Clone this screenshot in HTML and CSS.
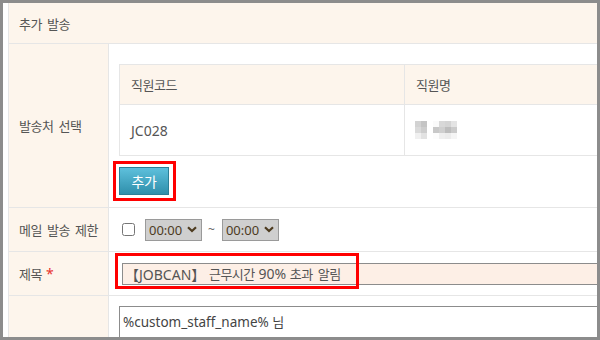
FILE: index.html
```html
<!DOCTYPE html>
<html lang="ko">
<head>
<meta charset="utf-8">
<link rel="stylesheet" href="styles.css">
</head>
<body>
<div class="frame">
  <div class="form">
    <div class="head"><span class="k">추가 발송</span></div>

    <div class="row row-dest">
      <div class="label"><span class="k">발송처 선택</span></div>
      <div class="cell cell-dest">
        <div class="staff">
          <div class="th c1"><span class="k">직원코드</span></div>
          <div class="th c2"><span class="k">직원명</span></div>
          <div class="td c1">JC028</div>
          <div class="td c2">
            <svg class="blur" width="42" height="18" viewBox="0 0 42 18">
              <rect x="0" y="0" width="6" height="6" fill="#d2d2d2"/>
              <rect x="6" y="0" width="6" height="6" fill="#c4c4c4"/>
              <rect x="0" y="6" width="6" height="6" fill="#dadada"/>
              <rect x="6" y="6" width="6" height="6" fill="#cdcdcd"/>
              <rect x="0" y="12" width="6" height="6" fill="#f0f0f0"/>
              <rect x="6" y="12" width="6" height="6" fill="#e2e2e2"/>
              <rect x="18" y="0" width="6" height="6" fill="#fafafa"/>
              <rect x="24" y="0" width="6" height="6" fill="#d8d8d8"/>
              <rect x="30" y="0" width="6" height="6" fill="#d4d4d4"/>
              <rect x="36" y="0" width="6" height="6" fill="#e4e4e4"/>
              <rect x="18" y="6" width="6" height="6" fill="#c8c8c8"/>
              <rect x="24" y="6" width="6" height="6" fill="#cfcfcf"/>
              <rect x="30" y="6" width="6" height="6" fill="#bdbdbd"/>
              <rect x="36" y="6" width="6" height="6" fill="#cbcbcb"/>
              <rect x="18" y="12" width="6" height="6" fill="#fcfcfc"/>
              <rect x="24" y="12" width="6" height="6" fill="#efefef"/>
              <rect x="30" y="12" width="6" height="6" fill="#ececec"/>
              <rect x="36" y="12" width="6" height="6" fill="#f5f5f5"/>
            </svg>
          </div>
        </div>
        <div class="btn-wrap">
          <button class="btn" type="button"><span class="k">추가</span></button>
          <span class="mark mark-btn"></span>
        </div>
      </div>
    </div>

    <div class="row row-limit">
      <div class="label"><span class="k">메일 발송 제한</span></div>
      <div class="cell cell-limit">
        <input type="checkbox" class="chk">
        <div class="sel">00:00<svg width="10" height="7" viewBox="0 0 10 7"><path d="M1 1.2 L5 5 L9 1.2" fill="none" stroke="#4d3b1f" stroke-width="2.2"/></svg></div>
        <span class="tilde">~</span>
        <div class="sel">00:00<svg width="10" height="7" viewBox="0 0 10 7"><path d="M1 1.2 L5 5 L9 1.2" fill="none" stroke="#4d3b1f" stroke-width="2.2"/></svg></div>
      </div>
    </div>

    <div class="row row-title">
      <div class="label"><span class="k">제목</span> <span class="req">*</span></div>
      <div class="cell cell-title">
        <div class="subject">【JOBCAN】 <span class="k">근무시간</span> 90% <span class="k">초과 알림</span></div>
        <span class="mark mark-subject"></span>
      </div>
    </div>

    <div class="row row-body">
      <div class="label"></div>
      <div class="cell cell-body">
        <div class="textarea">%custom_staff_name% <span class="k">님</span></div>
      </div>
    </div>
  </div>
</div>
</body>
</html>
```

FILE: styles.css
```css
html, body {
  margin: 0;
  padding: 0;
  background: #fff;
}
body {
  font-family: "Noto Sans", "Noto Sans CJK KR", sans-serif;
  font-size: 14px;
  color: #555;
}
.k {
  font-family: "Noto Sans CJK KR", sans-serif;
  font-size: 13px;
  letter-spacing: -0.5px;
  word-spacing: 2px;
}
.frame {
  width: 600px;
  height: 340px;
  box-sizing: border-box;
  border: 3px solid #8c8c8c;
  padding-left: 5px;
  overflow: hidden;
  background: #fff;
}
.form {
  width: 900px;
  border-left: 1px solid #e6e6e6;
}
.head {
  height: 40px;
  border-bottom: 1px solid #e6e6e6;
  background: #fdf5ec;
  display: flex;
  align-items: center;
  padding-left: 10px;
}
.row {
  display: grid;
  grid-template-columns: 100px 1fr;
  border-bottom: 1px solid #e6e6e6;
}
.label {
  background: #fdf5ec;
  border-right: 1px solid #e6e6e6;
  display: flex;
  align-items: center;
  padding-left: 10px;
}
.cell {
  padding-left: 10px;
  position: relative;
}
.cell-dest {
  padding-top: 20px;
  padding-bottom: 12px;
}
.staff {
  display: grid;
  grid-template-columns: 285px 1fr;
  border: 1px solid #e6e6e6;
  border-bottom: none;
}
.th, .td {
  display: flex;
  align-items: center;
  padding-left: 11px;
  border-bottom: 1px solid #e6e6e6;
}
.th {
  height: 39px;
  background: #fdf5ec;
}
.td {
  height: 50px;
  background: #fff;
}
.c1 {
  border-right: 1px solid #e6e6e6;
}
.blur {
  display: block;
  margin-left: -1px;
  margin-top: -1px;
}
.btn-wrap {
  position: relative;
  width: 50px;
  margin-top: 11px;
}
.btn {
  display: flex;
  align-items: center;
  justify-content: center;
  width: 50px;
  height: 28px;
  padding: 0;
  border: 1px solid #2b7f97;
  background: linear-gradient(#5ec0dc, #2f8fab);
  color: #fff;
  cursor: pointer;
}
.btn .k {
  font-size: 14px;
  letter-spacing: -0.3px;
}
.mark {
  position: absolute;
  border: 3px solid #ff0000;
  box-sizing: border-box;
  pointer-events: none;
}
.mark-btn {
  left: -6px;
  top: -6px;
  width: 63px;
  height: 40px;
}
.cell-limit {
  height: 43px;
  display: flex;
  align-items: center;
  padding-left: 13px;
}
.chk {
  margin: 0;
  width: 13px;
  height: 13px;
}
.sel {
  margin-left: 10px;
  width: 57px;
  height: 22px;
  box-sizing: border-box;
  border: 1px solid #9a9a9a;
  background: #cfcfcf;
  color: #4d3b1f;
  display: flex;
  align-items: center;
  justify-content: space-between;
  padding: 0 4px 0 3px;
  font-size: 13px;
}
.sel svg {
  display: block;
}
.tilde {
  margin-left: 6px;
  margin-right: -3px;
  font-size: 12px;
  color: #666;
}
.cell-title {
  height: 43px;
  display: flex;
  align-items: center;
  padding-left: 13px;
}
.req {
  color: #e8322e;
  margin-left: 4px;
}
.subject {
  width: 800px;
  height: 22px;
  box-sizing: border-box;
  border: 1px solid #8c8c8c;
  background: #fdefe6;
  display: flex;
  align-items: center;
  padding-left: 2px;
  color: #555;
  white-space: pre;
}
.mark-subject {
  left: 6px;
  top: 1px;
  width: 244px;
  height: 36px;
}
.cell-body {
  padding-top: 10px;
  height: 60px;
}
.textarea {
  border: 1px solid #8c8c8c;
  height: 60px;
  padding: 5px 3px;
  color: #444;
  font-size: 13.5px;
}
```
